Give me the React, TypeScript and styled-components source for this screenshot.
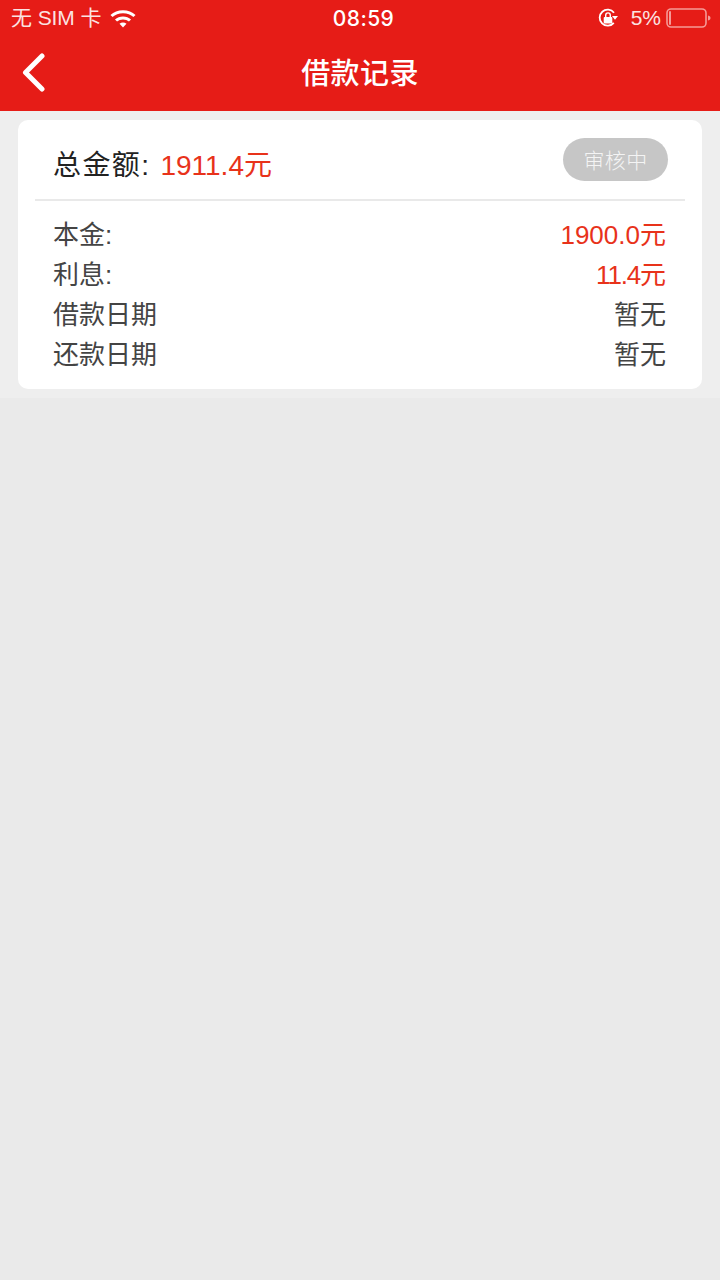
import React from "react";
import styled, { createGlobalStyle } from "styled-components";

const Global = createGlobalStyle`
  html, body { margin: 0; padding: 0; background: #eaeaea; }
  body { font-family: "Liberation Sans", "Noto Sans CJK SC", sans-serif; }
  * { box-sizing: border-box; }
`;
const Page = styled.div`
  width: 720px; height: 1280px; display: flex; flex-direction: column; background: #eaeaea; overflow: hidden;
`;
const Header = styled.header`
  height: 111px; background: #e61c17; color: #fff; display: flex; flex-direction: column;
`;
const StatusBar = styled.div`
  height: 37px; display: grid; grid-template-columns: 1fr auto 1fr; align-items: center; padding: 0 8px 1px 11px;
  font-size: 21px; color: #fbe3e2;
`;
const StatusLeft = styled.div`display: flex; align-items: center; gap: 9px;`;
const Carrier = styled.span`line-height: 1; margin-top: -2px; letter-spacing: -0.1px;`;
const StatusRight = styled.div`display: flex; align-items: center; justify-content: flex-end;`;
const Time = styled.div`font-size: 21px; letter-spacing: 0.4px; font-family: "Inter", sans-serif; font-weight: 500; color: #fff; padding-left: 4px;`;
const Percent = styled.span`margin: 0 5px 0 12px; font-size: 21px;`;
const NavBar = styled.div`flex: 1; display: flex; align-items: center; justify-content: center; position: relative;`;
const Title = styled.h1`margin: 0; font-size: 29px; font-weight: 500; line-height: 1; letter-spacing: 0.4px;`;
const Back = styled.svg`position: absolute; left: 21px; top: 16px;`;
const Section = styled.section`background: #eeeeee; padding: 9px 18px;`;
const Card = styled.div`background: #fff; border-radius: 10px; height: 269px; display: flex; flex-direction: column; padding: 0 17px;`;
const Summary = styled.div`
  height: 81px; display: flex; align-items: center; justify-content: space-between; padding: 0 17px 0 18px;
  border-bottom: 2px solid #e9e9e9;
`;
const Total = styled.div`font-size: 28px; color: #222; padding-top: 6px; display: flex; align-items: baseline; gap: 10px;`;
const TotalLabel = styled.span`letter-spacing: 1.4px;`;
const Red = styled.span<{ $tight?: number }>`color: #e8321a; letter-spacing: ${(p) => p.$tight ?? 0}px;`;
const Badge = styled.div`
  width: 105px; height: 43px; border-radius: 22px; background: #c6c6c6; color: #f4f4f4;
  display: flex; align-items: center; justify-content: center; padding-bottom: 2px; font-size: 21px; font-weight: 300; letter-spacing: 0.3px;
`;
const Rows = styled.div`padding: 11px 19px 0 18px; display: flex; flex-direction: column;`;
const Row = styled.div`display: flex; justify-content: space-between; align-items: center; height: 40px; font-size: 26px; color: #444;`;

const rows: [string, string, string | null, number][] = [
  ["本金:", "1900.0", "元", 0],
  ["利息:", "11.4", "元", -1.2],
  ["借款日期", "暂无", null, 0],
  ["还款日期", "暂无", null, 0],
];

export default function App() {
  return (
    <Page>
      <Global />
      <Header>
        <StatusBar>
          <StatusLeft>
            <Carrier>无 SIM 卡</Carrier>
            <svg width="26" height="19" viewBox="0 0 26 19">
              <path d="M1.5 7C7.5 1.2 18.5 1.2 24.5 7" fill="none" stroke="#fff" strokeWidth="3" />
              <path d="M6 11.5C9.8 8 16.2 8 20 11.5" fill="none" stroke="#fff" strokeWidth="3" />
              <path d="M9.5 14.8C11.5 13.1 14.5 13.1 16.5 14.8L13 18.5Z" fill="#fff" />
            </svg>
          </StatusLeft>
          <Time>08:59</Time>
          <StatusRight>
            <svg width="22" height="22" viewBox="0 0 22 22">
              <path d="M16.8 15.8A8 8 0 1 1 17 5.8" fill="none" stroke="#fff" strokeWidth="1.8" />
              <path d="M15 9L21 9L18 12.8Z" fill="#fff" />
              <rect x="6.7" y="10" width="8.6" height="6.5" rx="1" fill="#fff" />
              <path d="M8.7 10V8.2A2.3 2.3 0 0 1 13.3 8.2V10" fill="none" stroke="#fff" strokeWidth="1.4" />
            </svg>
            <Percent>5%</Percent>
            <svg width="46" height="22" viewBox="0 0 46 22">
              <rect x="1" y="2" width="39" height="18" rx="4" fill="none" stroke="#f59a97" strokeWidth="1.6" />
              <rect x="3" y="4" width="2" height="14" rx="1" fill="#f59a97" />
              <path d="M42 8.5C44 9 44.5 10 44.5 11S44 13 42 13.5Z" fill="#f59a97" />
            </svg>
          </StatusRight>
        </StatusBar>
        <NavBar>
          <Back width="26" height="40" viewBox="0 0 26 40">
            <path d="M21 3L4.5 19.5L21 36" fill="none" stroke="#fff" strokeWidth="5" strokeLinecap="round" strokeLinejoin="round" />
          </Back>
          <Title>借款记录</Title>
        </NavBar>
      </Header>
      <Section>
        <Card>
          <Summary>
            <Total>
              <TotalLabel>总金额:</TotalLabel>
              <Red>1911.4元</Red>
            </Total>
            <Badge>审核中</Badge>
          </Summary>
          <Rows>
            {rows.map(([label, value, unit, tight]) => (
              <Row key={label}>
                <span>{label}</span>
                {unit ? <Red><Red $tight={tight}>{value}</Red>{unit}</Red> : <span>{value}</span>}
              </Row>
            ))}
          </Rows>
        </Card>
      </Section>
    </Page>
  );
}
